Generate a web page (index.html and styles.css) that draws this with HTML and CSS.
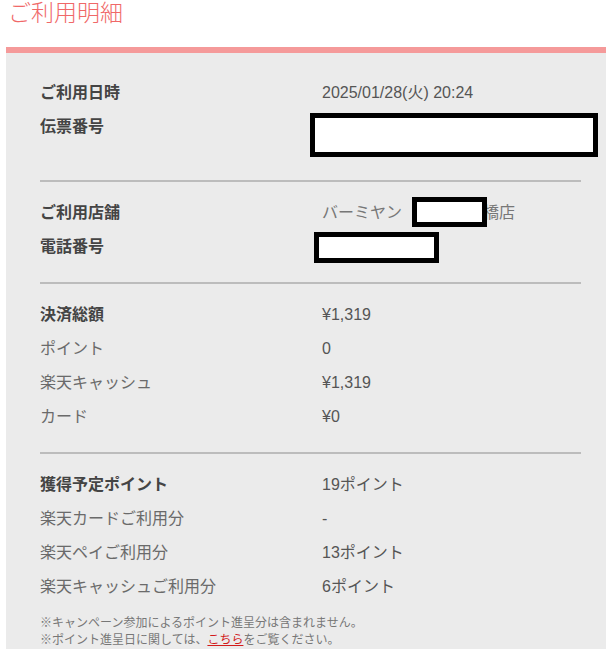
FILE: index.html
```html
<!DOCTYPE html>
<html lang="ja">
<head>
  <meta charset="UTF-8" />
  <meta name="viewport" content="width=device-width, initial-scale=1.0" />
  <title>ご利用明細</title>
  <link rel="stylesheet" href="styles.css">
</head>
<body>
  <h1 class="title">ご利用明細</h1>
  <main class="detail">
    <section class="group first">
      <div class="row">
        <div class="label strong">ご利用日時</div>
        <div class="value">2025/01/28(火) 20:24</div>
      </div>
      <div class="row">
        <div class="label strong">伝票番号</div>
        <div class="value"><span class="redact slip"></span></div>
      </div>
    </section>
    <section class="group">
      <div class="row">
        <div class="label strong">ご利用店舗</div>
        <div class="value light">バーミヤン<span class="redact store"></span>橋店</div>
      </div>
      <div class="row">
        <div class="label strong">電話番号</div>
        <div class="value"><span class="redact phone"></span></div>
      </div>
    </section>
    <section class="group">
      <div class="row">
        <div class="label strong">決済総額</div>
        <div class="value">¥1,319</div>
      </div>
      <div class="row">
        <div class="label">ポイント</div>
        <div class="value">0</div>
      </div>
      <div class="row">
        <div class="label">楽天キャッシュ</div>
        <div class="value">¥1,319</div>
      </div>
      <div class="row">
        <div class="label">カード</div>
        <div class="value">¥0</div>
      </div>
    </section>
    <section class="group last">
      <div class="row">
        <div class="label strong">獲得予定ポイント</div>
        <div class="value">19ポイント</div>
      </div>
      <div class="row">
        <div class="label">楽天カードご利用分</div>
        <div class="value">-</div>
      </div>
      <div class="row">
        <div class="label">楽天ペイご利用分</div>
        <div class="value">13ポイント</div>
      </div>
      <div class="row">
        <div class="label">楽天キャッシュご利用分</div>
        <div class="value">6ポイント</div>
      </div>
      <p class="notes">
        ※キャンペーン参加によるポイント進呈分は含まれません。<br>
        ※ポイント進呈日に関しては、<a href="#">こちら</a>をご覧ください。
      </p>
    </section>
  </main>
</body>
</html>
```

FILE: styles.css
```css
:root {
  --red: #f06868;
  --pink: #f59a9a;
  --panel: #ebebeb;
  --rule: #bcbcbc;
  --text: #555;
}
* { box-sizing: border-box; margin: 0; padding: 0; }
body {
  font-family: "Liberation Sans", "Noto Sans CJK JP", sans-serif;
  background: #fff;
  color: var(--text);
  overflow: hidden;
}
.title {
  font-size: 23px;
  font-weight: 200;
  line-height: 26px;
  color: var(--red);
  padding-left: 8px;
  margin-bottom: 21px;
}
.detail {
  margin-left: 6px;
  width: 600px;
  min-height: 620px;
  background: var(--panel);
  border-top: 6px solid var(--pink);
  padding: 0 25px 0 34px;
}
.group {
  padding: 14px 0 18px;
  border-top: 2px solid var(--rule);
}
.group.first {
  border-top: none;
  padding-top: 23px;
}
.group.last {
  padding-bottom: 0;
}
.row {
  display: flex;
  align-items: flex-start;
  min-height: 34px;
  font-size: 16px;
  line-height: 34px;
}
.label {
  width: 282px;
  flex-shrink: 0;
  color: #6a6a6a;
}
.label.strong {
  font-weight: bold;
  color: #444;
}
.value {
  color: var(--text);
  white-space: nowrap;
}
.value.light {
  color: #777;
}
.redact {
  display: inline-block;
  background: #fff;
  border: 5px solid #000;
  vertical-align: top;
  position: relative;
  z-index: 1;
}
.redact.slip {
  width: 288px;
  height: 44px;
  margin: 3px 0 5px -12px;
}
.redact.store {
  width: 75px;
  height: 30px;
  margin: 1px -4px 0 10px;
}
.redact.phone {
  width: 125px;
  height: 31px;
  margin: 2px 0 0 -8px;
}
.notes {
  margin-top: 11px;
  font-size: 12px;
  line-height: 17px;
  color: #777;
}
.notes a {
  color: #d21b1b;
  text-decoration: underline;
}
```
